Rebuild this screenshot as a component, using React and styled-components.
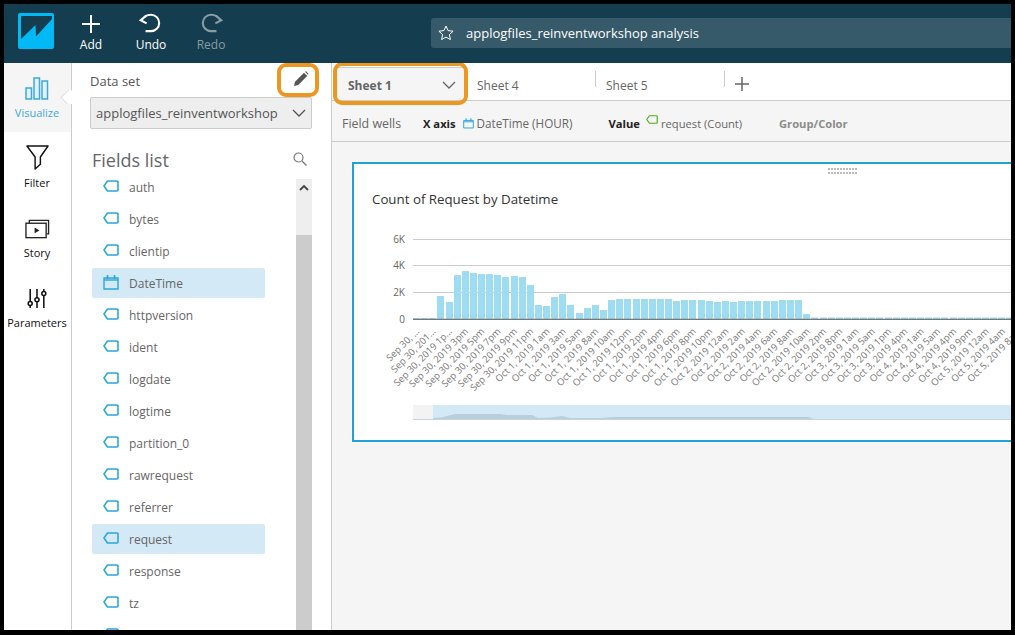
import React from "react";
import styled, { createGlobalStyle } from "styled-components";

const Global = createGlobalStyle`
  html, body { margin: 0; padding: 0; background: #000; }
  * { box-sizing: border-box; }
  body { font-family: "Open Sans", "Noto Sans", sans-serif; }
`;

const Frame = styled.div`
  width: 1015px; height: 635px; overflow: hidden;
  border-style: solid; border-color: #000; border-width: 4px 4px 5px 4px;
  display: flex; flex-direction: column; background: #fff;
`;
const Header = styled.header`
  height: 59px; flex: none; background: #143d4f; display: flex; align-items: center; padding-left: 14px;
`;
const Logo = styled.svg`width: 36px; height: 36px; flex: none; margin-right: 7px; margin-top: -5px;`;
const ToolButton = styled.div`
  width: 60px; flex: none; display: flex; flex-direction: column; align-items: center; gap: 1px;
  margin-top: -2px; font-size: 12px; line-height: 16px; font-weight: 500;
  color: ${p => (p.$disabled ? "#8a9ca4" : "#fff")};
  svg { display: block; }
`;
const TitleBar = styled.div`
  flex: 1; height: 30px; margin-left: 190px; margin-top: -1px; background: #365a69; border-radius: 3px 0 0 3px;
  display: flex; align-items: center; padding-left: 7px; gap: 12px; color: #fff; font-size: 13px;
`;
const Body = styled.div`flex: 1; min-height: 0; display: flex;`;
const Rail = styled.nav`width: 68px; flex: none; border-right: 1px solid #ccc; position: relative; z-index: 2; background: #fff;`;
const RailItem = styled.div`
  height: ${p => (p.$active ? "69px" : "70px")}; position: relative; padding-right: 1px;
  background: ${p => (p.$active ? "#f5f5f5" : "#fff")};
  color: ${p => (p.$active ? "#3ba9dc" : "#111")};
  display: flex; flex-direction: column; align-items: center;
  padding-top: ${p => p.$pad || 12}px;
  font-size: 11px; line-height: 15px;
  svg { display: block; flex: none; }
`;
const RailLabel = styled.span`margin-top: ${p => p.$gap || 5}px; white-space: nowrap;`;
const Notch = styled.span`
  position: absolute; right: -1px; top: 27px; width: 12px; height: 14px; overflow: hidden;
  &::after {
    content: ""; position: absolute; left: 3px; top: 1px; width: 12px; height: 12px;
    background: #fff; border-left: 1px solid #ddd; border-bottom: 1px solid #ddd; transform: rotate(45deg);
  }
`;
const Panel = styled.aside`width: 260px; flex: none; border-right: 1px solid #ccc; display: flex; flex-direction: column; position: relative;`;
const DataSetRow = styled.div`
  height: 34px; flex: none; padding: 10px 22px 0 18px; font-size: 13px; line-height: 17px; color: #555;
  display: flex; justify-content: space-between;
`;
const PencilIcon = styled.svg`margin-top: -2px;`;
const Highlight = styled.span`
  position: absolute; border: 4px solid #ec971f; border-radius: 9px; pointer-events: none;
  left: ${p => p.$l}px; top: ${p => p.$t}px; width: ${p => p.$w}px; height: ${p => p.$h}px; z-index: 5;
`;
const Select = styled.div`
  height: 32px; flex: none; margin: 0 19px 0 18px; background: #eee; border: 1px solid #ccc; border-radius: 2px;
  display: flex; align-items: center; justify-content: space-between; padding: 0 5px; font-size: 13px; color: #555;
`;
const FieldsHead = styled.div`
  height: 43px; flex: none; padding: 20px 24px 0 20px; display: flex; justify-content: space-between; align-items: flex-start;
`;
const FieldsTitle = styled.h2`margin: 0; font-size: 18px; line-height: 23px; font-weight: 400; color: #666;`;
const SearchIcon = styled.svg`margin-top: 3px;`;
const ListArea = styled.div`flex: 1; min-height: 0; display: flex; overflow: hidden;`;
const List = styled.ul`list-style: none; margin: 0; padding: 0 0 0 20px; width: 224px; flex: none;`;
const Row = styled.li`
  width: 173px; height: 30px; margin-bottom: 2px; display: flex; align-items: center; padding-left: 11px; gap: 10px;
  border-radius: 2px; font-size: 12px; color: #666; background: ${p => (p.$on ? "#d3e9f6" : "transparent")};
  svg { flex: none; transform: translateY(-1px); }
`;
const Scrollbar = styled.div`width: 16px; flex: none; margin-top: 7px; display: flex; flex-direction: column;`;
const ScrollUp = styled.div`height: 56px; background: #eee; display: flex; justify-content: center; padding-top: 5px;`;
const ScrollThumb = styled.div`flex: 1; background: #ccc;`;
const Main = styled.main`flex: 1; min-width: 0; display: flex; flex-direction: column; background: #f5f5f5; overflow: hidden;`;
const Tabs = styled.div`
  height: 38px; flex: none; background: #fff; border-bottom: 1px solid #ccc; display: flex; align-items: flex-end;
  padding-left: 4px; position: relative; z-index: 3;
`;
const ActiveTab = styled.div`
  width: 130px; height: 33px; border: 1px solid #ccc; border-bottom: 0; background: #f5f5f5; border-radius: 2px 2px 0 0;
  display: flex; align-items: center; justify-content: space-between; padding: 2px 9px 0 11px;
  font-size: 12px; font-weight: 700; color: #666;
`;
const Tab = styled.div`
  width: ${p => p.$w}px; height: 33px; display: flex; align-items: center; padding: 3px 0 0 ${p => p.$pad}px; font-size: 12px; color: #666; position: relative;
  &::after { content: ""; position: absolute; right: 0; top: 4px; height: 16px; width: 1px; background: #ccc; }
`;
const AddTab = styled.div`height: 33px; display: flex; align-items: center; margin-left: 10px; padding-top: 1px;`;
const Wells = styled.div`
  height: 41px; flex: none; border-bottom: 1px solid #ccc; display: flex; align-items: center; padding: 4px 0 0 10px; font-size: 11.7px; color: #666;
`;
const WellLabel = styled.span`width: ${p => p.$w}px; flex: none; font-size: 12.4px;`;
const WellName = styled.b`font-size: 11.2px; font-weight: 700; color: ${p => (p.$muted ? "#8b8b8b" : "#222")}; margin-right: ${p => p.$gap || 7}px; white-space: nowrap;`;
const WellField = styled.span`
  width: ${p => p.$w}px; flex: none; display: flex; align-items: center; gap: 3px; white-space: nowrap; font-size: ${p => p.$size || 11.7}px;
  svg { flex: none; }
`;
const ValueTag = styled.span`display: flex; margin-top: -7px;`;
const Canvas = styled.div`flex: 1; padding: 20px 0 0 20px; min-height: 0;`;
const Card = styled.section`
  width: 700px; height: 280px; background: #fff; border: 2px solid #1fa2d6; position: relative; overflow: hidden;
`;
const Grip = styled.svg`position: absolute; left: 474px; top: 4px;`;
const CardTitle = styled.h3`margin: 0; padding: 26px 0 0 18px; height: 66px; font-size: 13.3px; line-height: 18px; font-weight: 400; color: #333;`;
const Chart = styled.svg`display: block;`;
const AxisLabels = styled.g`opacity: 0.99;`;

const TagIcon = ({ color = "#2aa7dc", w = 16, h = 12 }) => (
  <svg width={w} height={h} viewBox="0 0 16 12">
    <path d="M4.5 1H14a1 1 0 0 1 1 1v8a1 1 0 0 1-1 1H4.5L1 6z" fill="none" stroke={color} strokeWidth="1.6" strokeLinejoin="round" />
  </svg>
);
const DateIcon = ({ w = 16, h = 15 }) => (
  <svg width={w} height={h} viewBox="0 0 16 15">
    <path d="M1 3h14v11H1z" fill="none" stroke="#2aa7dc" strokeWidth="1.4" />
    <path d="M1 5h14" stroke="#2aa7dc" strokeWidth="1.4" />
    <path d="M4.5 0v4M11.5 0v4" stroke="#2aa7dc" strokeWidth="1.6" />
  </svg>
);
const Chevron = ({ w = 14, color = "#555" }) => (
  <svg width={w} height={w * 0.6} viewBox="0 0 14 8.4"><path d="M1 1l6 6 6-6" fill="none" stroke={color} strokeWidth="1.3" /></svg>
);

const fields = ["auth","bytes","clientip","DateTime","httpversion","ident","logdate","logtime","partition_0","rawrequest","referrer","request","response","tz",""];

const tops = [294,294,294,228,246,165,153,159,162,162,165,171,168,171,195,255,258,231,222,255,279,264,255,270,240,237,237,237,237,237,237,237,243,240,240,240,243,246,243,246,243,243,243,243,243,240,240,240,282];
const heights = [...tops.map(z => (297 - z) / 3), ...Array(25).fill(1.5)];

const s19 = "Sep 30, 2019 ";
const o1 = "Oct 1, 2019 ", o2 = "Oct 2, 2019 ", o3 = "Oct 3, 2019 ", o4 = "Oct 4, 2019 ", o5 = "Oct 5, 2019 ";
const labels = [
  "Sep 30, ...", "Sep 30, 201...", "Sep 30, 2019 1p...",
  ...["3pm","5pm","7pm","9pm","11pm"].map(t => s19 + t),
  ...["1am","3am","5am","8am","10am","12pm","2pm","4pm","6pm","8pm","10pm"].map(t => o1 + t),
  ...["12am","2am","4am","6am","8am","10am","2pm","8pm"].map(t => o2 + t),
  ...["1am","5am","1pm","4pm"].map(t => o3 + t),
  ...["1am","5am","4pm","9pm"].map(t => o4 + t),
  ...["12am","4am","8am"].map(t => o5 + t),
];

const BarChart = () => (
  <Chart width="660" height="195" viewBox="354 230 660 195">
    {[["6K", 239.5], ["4K", 265.5], ["2K", 292.5]].map(([t, y]) => (
      <g key={t}>
        <line x1="413" x2="1015" y1={y} y2={y} stroke="#ccc" />
        <text x="405" y={y + 3.5} textAnchor="end" fontSize="10" fill="#666" fontFamily="Open Sans">{t}</text>
      </g>
    ))}
    <text x="405" y="322.5" textAnchor="end" fontSize="10" fill="#666" fontFamily="Open Sans">0</text>
    {heights.map((h, i) => (
      <rect key={i} x={Math.round(413 + i * 8.13)} y={319 - h} width="7" height={h} fill="#9edcf1" />
    ))}
    <line x1="413" x2="1015" y1="319.3" y2="319.3" stroke="#555" />
    <AxisLabels>
      {labels.map((t, i) => {
        const x = 420 + i * 16.27;
        return (
          <text key={i} x={x} y="332" textAnchor="end" fontSize="9.5" fill="#777" fontFamily="Open Sans" transform={`rotate(-45 ${x} 332)`}>{t}</text>
        );
      })}
    </AxisLabels>
    <rect x="413" y="405" width="602" height="15" fill="#d3e9f6" />
    <rect x="413" y="405" width="20" height="15" fill="#f3f3f3" />
    <path d="M433 420V418L441 417.5L455 414H500L507 415H532L538 418L550 417.5L562 416L570 418H600L613 417H808L815 419.5H1015V420Z" fill="#b9d0dc" />
    <line x1="413" x2="1015" y1="419.5" y2="419.5" stroke="#c4d5dd" />
  </Chart>
);

export default function App() {
  return (
    <Frame>
      <Global />
      <Header>
        <Logo viewBox="0 0 36 36">
          <rect width="36" height="36" rx="2" fill="#00b9f5" />
          <path d="M3 3H34V6L18 23.5L17.5 12L3 26Z" fill="#143d4f" />
        </Logo>
        <ToolButton>
          <svg width="24" height="24" viewBox="0 0 24 24"><path d="M12 3v18M3 12h18" stroke="#fff" strokeWidth="2" /></svg>
          Add
        </ToolButton>
        <ToolButton>
          <svg width="24" height="24" viewBox="0 0 22 22"><path d="M6.5 3.5L1.5 7.5L7 10.5M2.5 7.5C4 4.5 7.5 2.5 11 2.5A7.5 7.5 0 0 1 11 17.5H6" fill="none" stroke="#fff" strokeWidth="1.9" /></svg>
          Undo
        </ToolButton>
        <ToolButton $disabled>
          <svg width="24" height="24" viewBox="0 0 22 22"><path d="M15.5 3.5L20.5 7.5L15 10.5M19.5 7.5C18 4.5 14.5 2.5 11 2.5A7.5 7.5 0 0 0 11 17.5H16" fill="none" stroke="#8a9ca4" strokeWidth="1.9" /></svg>
          Redo
        </ToolButton>
        <TitleBar>
          <svg width="16" height="16" viewBox="0 0 16 16"><path d="M8 1l2.1 4.6 5 .6-3.7 3.4 1 5L8 12.1 3.6 14.6l1-5L.9 6.2l5-.6z" fill="none" stroke="#fff" strokeWidth="1" strokeLinejoin="round" /></svg>
          applogfiles_reinventworkshop analysis
        </TitleBar>
      </Header>
      <Body>
        <Rail>
          <RailItem $active $pad={14}>
            <svg width="24" height="23" viewBox="0 0 24 23" fill="#e3f2fa" stroke="#3ba9dc" strokeWidth="1.5"><rect x="1" y="11" width="5.5" height="11" /><rect x="9" y="1" width="5.5" height="21" /><rect x="17" y="4" width="5.5" height="18" /></svg>
            <RailLabel $gap={5}>Visualize</RailLabel>
            <Notch />
          </RailItem>
          <RailItem $pad={13}>
            <svg width="23" height="25" viewBox="0 0 24 26"><path d="M1 1h22L15 12.5V20l-5.5 5V12.5z" fill="none" stroke="#111" strokeWidth="1.5" strokeLinejoin="round" /></svg>
            <RailLabel $gap={5}>Filter</RailLabel>
          </RailItem>
          <RailItem $pad={17}>
            <svg width="25" height="20" viewBox="0 0 26 20" fill="none" stroke="#222" strokeWidth="1.4"><rect x="1" y="4" width="21" height="15" /><path d="M4.5 4V1h20v14h-2" /><path d="M10 8.5l5 3-5 3z" fill="#222" stroke="none" /></svg>
            <RailLabel $gap={6}>Story</RailLabel>
          </RailItem>
          <RailItem $pad={15}>
            <svg width="20" height="22" viewBox="0 0 22 22" fill="#fff" stroke="#111" strokeWidth="1.7"><path d="M3.5 1v21M11 1v21M18.5 1v21" /><circle cx="3.5" cy="17" r="2.2" /><circle cx="11" cy="13" r="2.2" /><circle cx="18.5" cy="6" r="2.2" /></svg>
            <RailLabel $gap={6}>Parameters</RailLabel>
          </RailItem>
        </Rail>
        <Panel>
          <DataSetRow>
            Data set
            <PencilIcon width="16" height="16" viewBox="0 0 16 16"><path d="M1 15l1-4.2L11 1.8l3.2 3.2-9 9z M12 .8l1-.5 2.5 2.5-.5 1z" fill="#555" /></PencilIcon>
          </DataSetRow>
          <Highlight $l={205} $t={0} $w={42} $h={34} />
          <Select>
            applogfiles_reinventworkshop
            <Chevron w={14} />
          </Select>
          <FieldsHead>
            <FieldsTitle>Fields list</FieldsTitle>
            <SearchIcon width="14" height="14" viewBox="0 0 14 14" fill="none" stroke="#777" strokeWidth="1.2"><circle cx="5.5" cy="5.5" r="4.5" /><path d="M9 9l4.5 4.5" /></SearchIcon>
          </FieldsHead>
          <ListArea>
            <List>
              {fields.map((f, i) => (
                <Row key={i} $on={f === "DateTime" || f === "request"}>
                  {f === "DateTime" ? <DateIcon /> : <TagIcon />}
                  {f}
                </Row>
              ))}
            </List>
            <Scrollbar>
              <ScrollUp>
                <svg width="10" height="7" viewBox="0 0 10 7"><path d="M1 6l4-4 4 4" fill="none" stroke="#444" strokeWidth="1.8" /></svg>
              </ScrollUp>
              <ScrollThumb />
            </Scrollbar>
          </ListArea>
        </Panel>
        <Main>
          <Tabs>
            <ActiveTab>
              Sheet 1
              <Chevron w={14} color="#666" />
            </ActiveTab>
            <Highlight $l={1} $t={-1} $w={135} $h={43} />
            <Tab $w={130} $pad={11}>Sheet 4</Tab>
            <Tab $w={129} $pad={10}>Sheet 5</Tab>
            <AddTab><svg width="14" height="14" viewBox="0 0 14 14"><path d="M7 0v14M0 7h14" stroke="#666" strokeWidth="1.5" /></svg></AddTab>
          </Tabs>
          <Wells>
            <WellLabel $w={81}>Field wells</WellLabel>
            <WellName>X axis</WellName>
            <WellField $w={146}><DateIcon w={11} h={11} />DateTime (HOUR)</WellField>
            <WellName $gap={6}>Value</WellName>
            <WellField $w={133} $size={11.2}><ValueTag><TagIcon color="#4cb01c" w={12} h={9} /></ValueTag>request (Count)</WellField>
            <WellName $muted>Group/Color</WellName>
          </Wells>
          <Canvas>
            <Card>
              <Grip width="30" height="7" viewBox="0 0 30 7">
                {[1, 5].map(y => <line key={y} x1="0" x2="30" y1={y} y2={y} stroke="#bbb" strokeWidth="2" strokeDasharray="2 1" />)}
              </Grip>
              <CardTitle>Count of Request by Datetime</CardTitle>
              <BarChart />
            </Card>
          </Canvas>
        </Main>
      </Body>
    </Frame>
  );
}
